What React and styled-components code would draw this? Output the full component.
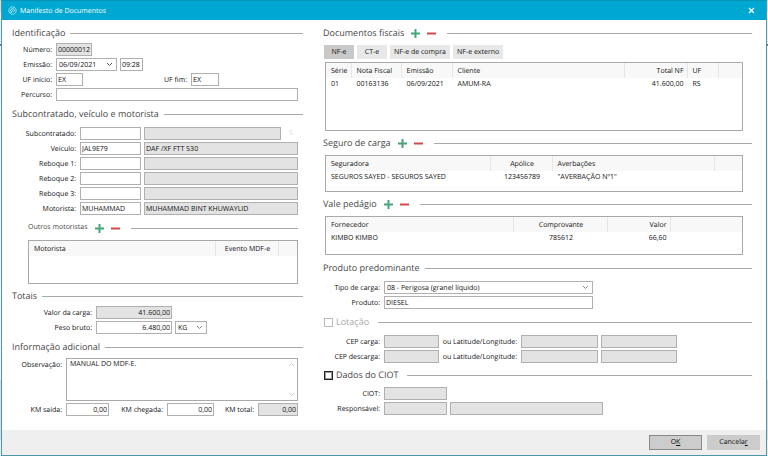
import React, { useId } from "react";
import styled, { createGlobalStyle, css } from "styled-components";

const Global = createGlobalStyle`
  * { box-sizing: border-box; }
  body { margin: 0; background: #eef3f5; text-rendering: geometricPrecision; }
  body, button, input, select, textarea {
    font-family: "Open Sans", "Noto Sans", sans-serif;
    font-size: 7px;
    color: #111;
  }
  button, input, select, textarea { text-rendering: inherit; }
`;

const Page = styled.div`
  min-height: 100vh;
  padding: 0 1px;
  display: flex;
  background: linear-gradient(#c9dde3 0 12px, #e9f1f4 12px 44px, #5c7f88 44px 46px, #eef3f5 46px 380px, #d3dfe3 380px 440px, #e9eff1 440px);
`;

const Window = styled.main`
  flex: 1;
  display: flex;
  flex-direction: column;
  background: #fff;
  border: 1px solid #4d98a8;
  border-top-color: #0793b5;
`;

const TitleBar = styled.header`
  height: 19px;
  flex: none;
  display: flex;
  align-items: center;
  gap: 3px;
  padding: 0 11px 0 6px;
  background: #00a8d1;
  color: #fff;
`;

const Title = styled.h1`
  flex: 1;
  margin: 0;
  padding-top: 1px;
  font-size: 7px;
  font-weight: 400;
`;

const CloseButton = styled.button`
  display: flex;
  padding: 0;
  border: 0;
  background: none;
`;

const Body = styled.div`
  flex: 1;
  display: grid;
  grid-template-columns: 291fr 429fr;
  gap: 20px;
  padding: 5px 14px 14px 10px;
`;

const Column = styled.div`
  display: flex;
  flex-direction: column;
  gap: 4px;
  min-width: 0;
`;

const Section = styled.section`
  display: flex;
  flex-direction: column;
  gap: ${(p) => p.$gap ?? 4}px;
  padding-bottom: ${(p) => p.$after ?? 0}px;
`;

const HeadingRow = styled.div`
  height: 16px;
  display: flex;
  align-items: center;
  gap: ${(p) => (p.$actions ? 7 : 5)}px;
  color: ${(p) => (p.$muted ? "#aaa" : "#484848")};

  &::after {
    content: "";
    flex: 1;
    height: 1px;
    margin-left: ${(p) => (p.$actions || p.$check ? 4 : 0)}px;
    background: #a9a9a9;
  }
`;

const HeadingText = styled.h2`
  margin: 0;
  font-size: ${(p) => (p.$small ? 7 : 9)}px;
  font-weight: 400;
  line-height: 16px;
  white-space: nowrap;
`;

const IconButton = styled.button`
  display: flex;
  padding: 0;
  border: 0;
  background: none;
`;

const CheckLabel = styled.label`
  display: flex;
  align-items: center;
  gap: 3px;
`;

const CheckBox = styled.input`
  appearance: none;
  width: 9px;
  height: 9px;
  margin: 0 0 0 1px;
  background: #fff;
  border: 1px solid #222;
  outline: 1px solid #999;
  outline-offset: -2px;

  &:disabled {
    border-color: #bbb;
    outline: 0;
  }
`;

const Rows = styled.div`
  display: flex;
  flex-direction: column;
  gap: 2px;
  padding-right: ${(p) => (p.$inset ? 5 : 0)}px;
`;

const Row = styled.div`
  display: flex;
  gap: 3px;
`;

const Label = styled.label`
  flex: 0 0 ${(p) => (p.$w ? `${p.$w}px` : "auto")};
  height: 13px;
  padding-right: 1px;
  text-align: right;
  line-height: 15px;
  white-space: nowrap;
`;

const box = css`
  flex: ${(p) => (p.$w ? `0 0 ${p.$w}px` : "1 1 0")};
  min-width: 0;
  width: 0;
  margin: 0;
  border: 1px solid #b0b0b0;
  border-radius: 0;
  background: #fff;
`;

const TextBox = styled.input`
  ${box}
  height: 13px;
  padding: 1px 1px 0;
  text-align: ${(p) => (p.$right ? "right" : "left")};

  &:read-only {
    background: #e3e3e3;
  }
`;

const TextArea = styled.textarea`
  display: block;
  width: 100%;
  height: 43px;
  padding: 0 3px;
  line-height: 12px;
  border: 1px solid #a9a9a9;
  resize: none;
  overflow: hidden;
`;

const AreaWrap = styled.div`
  flex: 1;
  position: relative;
`;

const ScrollArrows = styled.div`
  position: absolute;
  inset: 4px 3px 4px auto;
  display: flex;
  flex-direction: column;
  justify-content: space-between;
`;

const SelectWrap = styled.div`
  ${box}
  height: 13px;
  display: grid;
  align-items: center;

  & > * { grid-area: 1 / 1; }
  & > svg { justify-self: end; margin-right: 3px; pointer-events: none; }
`;

const NativeSelect = styled.select`
  appearance: none;
  width: 100%;
  height: 11px;
  padding: 1px 12px 0 2px;
  border: 0;
  background: transparent;
`;

const Search = styled.span`
  width: 14px;
  text-align: center;
  color: #ddd;
  line-height: 13px;
`;

const Tabs = styled.div`
  display: flex;
  gap: 3px;
  padding: 1px 0 0 1px;
`;

const Tab = styled.button`
  height: 14px;
  padding: 0 4px;
  min-width: 30px;
  border: 0;
  white-space: nowrap;
  background: ${(p) => (p["aria-selected"] ? "#c9c9c9" : "#e8e8e8")};
`;

const TableBox = styled.div`
  min-height: ${(p) => p.$h}px;
  margin: 0 ${(p) => (p.$nested ? "0" : "9px")} 0 ${(p) => (p.$nested ? "0" : "2px")};
  border: 1px solid #a9a9a9;
`;

const Table = styled.table`
  width: 100%;
  table-layout: fixed;
  border-collapse: collapse;
`;

const Cell = styled.td`
  height: ${(p) => (p.as ? 15 : 12)}px;
  padding: ${(p) => (p.as ? 2 : 0)}px 3px 0 5px;
  font-weight: 400;
  text-align: ${(p) => p.$align ?? "left"};
  white-space: nowrap;
  background: ${(p) => (p.as ? "#f8f8f8" : "none")};
  border-right: ${(p) => (p.as ? "1px solid #e6e6e6" : "1px solid transparent")};

  &:last-child { border-right: 0; }
`;

const Nested = styled.div`
  display: flex;
  flex-direction: column;
  gap: 4px;
  padding: 1px 5px 0 16px;
`;

const Footer = styled.footer`
  height: 25px;
  flex: none;
  display: flex;
  justify-content: flex-end;
  align-items: center;
  gap: 5px;
  padding: 0 6px;
  background: #efefef;
`;

const PushButton = styled.button`
  width: 53px;
  height: 15px;
  padding: 0;
  background: #ccc;
  border: 1px solid ${(p) => (p.$primary ? "#888" : "#ccc")};
`;

const Chevron = ({ up, color = "#888" }) => (
  <svg width="7" height="5" viewBox="0 0 7 5" aria-hidden="true">
    <path d={up ? "M1 4l2.5-2.5L6 4" : "M1 1l2.5 2.5L6 1"} fill="none" stroke={color} />
  </svg>
);

const Logo = () => (
  <svg width="9" height="9" viewBox="0 0 9 9" aria-hidden="true">
    <path d="M2.2 7.4A3.7 3.7 0 1 1 4.5 8.2L3 8.4" fill="none" stroke="#bdeaf5" strokeWidth=".8" />
    <path d="M3.2 5.7A1.8 1.8 0 1 1 5.8 5.7M4.5 4.4L2.5 7.5" fill="none" stroke="#dff6fb" strokeWidth=".9" />
  </svg>
);

const Actions = () => (
  <>
    <IconButton aria-label="Adicionar">
      <svg width="9" height="9" viewBox="0 0 9 9">
        <path d="M4.5 0v9M0 4.5h9" stroke="#45a578" strokeWidth="2" />
      </svg>
    </IconButton>
    <IconButton aria-label="Remover">
      <svg width="9" height="9" viewBox="0 0 9 9">
        <path d="M0 4.5h9" stroke="#d24b4b" strokeWidth="2" />
      </svg>
    </IconButton>
  </>
);

const Heading = ({ children, actions, small }) => (
  <HeadingRow $actions={actions}>
    <HeadingText $small={small}>{children}</HeadingText>
    {actions && <Actions />}
  </HeadingRow>
);

const CheckHeading = ({ children, disabled }) => (
  <HeadingRow $check $muted={disabled}>
    <CheckLabel>
      <CheckBox type="checkbox" disabled={disabled} />
      <HeadingText>{children}</HeadingText>
    </CheckLabel>
  </HeadingRow>
);

const Field = ({ label, lw, w, value = "", locked, right }) => {
  const id = useId();
  return (
    <>
      <Label htmlFor={id} $w={lw}>{label}</Label>
      <TextBox id={id} $w={w} $right={right} defaultValue={value} readOnly={locked} />
    </>
  );
};

const Select = ({ id, w, value, label, color }) => (
  <SelectWrap $w={w}>
    <NativeSelect id={id} aria-label={label}>
      <option>{value}</option>
    </NativeSelect>
    <Chevron color={color} />
  </SelectWrap>
);

const DataTable = ({ h, nested, cols, row }) => (
  <TableBox $h={h} $nested={nested}>
    <Table>
      <colgroup>
        {cols.map(([name, width], i) => (
          <col key={i} width={width} />
        ))}
      </colgroup>
      <thead>
        <tr>
          {cols.map(([name, , align], i) => (
            <Cell as="th" key={i} $align={align}>{name}</Cell>
          ))}
        </tr>
      </thead>
      {row && (
        <tbody>
          <tr>
            {row.map((text, i) => (
              <Cell key={i} $align={cols[i][2]}>{text}</Cell>
            ))}
          </tr>
        </tbody>
      )}
    </Table>
  </TableBox>
);

const people = [
  ["Veículo:", "JAL9E79", "DAF /XF FTT 530"],
  ["Reboque 1:", "", ""],
  ["Reboque 2:", "", ""],
  ["Reboque 3:", "", ""],
  ["Motorista:", "MUHAMMAD", "MUHAMMAD BINT KHUWAYLID"],
];

export default function App() {
  return (
    <Page>
      <Global />
      <Window>
        <TitleBar>
          <Logo />
          <Title>Manifesto de Documentos</Title>
          <CloseButton aria-label="Fechar">
            <svg width="7" height="7" viewBox="0 0 7 7">
              <path d="M1 1l5 5M6 1L1 6" stroke="#fff" strokeWidth="1.2" />
            </svg>
          </CloseButton>
        </TitleBar>
        <Body>
          <Column>
            <Section $gap={2} $after={1}>
              <Heading>Identificação</Heading>
              <Rows $inset>
                <Row><Field label="Número:" lw={41} w={36} value="00000012" locked /></Row>
                <Row>
                  <Label htmlFor="emissao" $w={41}>Emissão:</Label>
                  <Select id="emissao" w={61} value="06/09/2021" color="#555" />
                  <TextBox aria-label="Hora" $w={23} defaultValue="09:28" />
                </Row>
                <Row>
                  <Field label="UF início:" lw={41} w={27} value="EX" />
                  <Field label="UF fim:" lw={102} w={28} value="EX" />
                </Row>
                <Row><Field label="Percurso:" lw={41} /></Row>
              </Rows>
            </Section>
            <Section $gap={5}>
              <Heading>Subcontratado, veículo e motorista</Heading>
              <Rows $inset>
                <Row>
                  <Field label="Subcontratado:" lw={65} w={61} />
                  <TextBox aria-label="Nome do subcontratado" readOnly />
                  <Search>S</Search>
                </Row>
                {people.map(([label, code, name]) => (
                  <Row key={label}>
                    <Field label={label} lw={65} w={61} value={code} />
                    <TextBox aria-label={`${label} descrição`} defaultValue={name} readOnly />
                  </Row>
                ))}
              </Rows>
            </Section>
            <Nested>
              <Heading small actions>Outros motoristas</Heading>
              <DataTable
                h={44}
                nested
                cols={[["Motorista"], ["Evento MDF-e", 63, "center"], ["", 19]]}
              />
            </Nested>
            <Section $gap={2} $after={1}>
              <Heading>Totais</Heading>
              <Rows $inset>
                <Row><Field label="Valor da carga:" lw={81} w={76} value="41.600,00" locked right /></Row>
                <Row>
                  <Field label="Peso bruto:" lw={81} w={76} value="6.480,00" right />
                  <Select label="Unidade" w={32} value="KG" />
                </Row>
              </Rows>
            </Section>
            <Section $gap={3}>
              <Heading>Informação adicional</Heading>
              <Rows $inset>
                <Row>
                  <Label htmlFor="obs" $w={51}>Observação:</Label>
                  <AreaWrap>
                    <TextArea id="obs" defaultValue="MANUAL DO MDF-E." />
                    <ScrollArrows>
                      <Chevron up color="#ccc" />
                      <Chevron color="#ccc" />
                    </ScrollArrows>
                  </AreaWrap>
                </Row>
                <Row>
                  <Field label="KM saída:" lw={51} w={43} value="0,00" right />
                  <Field label="KM chegada:" lw={52} w={47} value="0,00" right />
                  <Field label="KM total:" lw={38} value="0,00" locked right />
                </Row>
              </Rows>
            </Section>
          </Column>
          <Column>
            <Section $gap={3}>
              <Heading actions>Documentos fiscais</Heading>
              <Tabs role="tablist">
                <Tab role="tab" aria-selected>NF-e</Tab>
                <Tab role="tab">CT-e</Tab>
                <Tab role="tab">NF-e de compra</Tab>
                <Tab role="tab">NF-e externo</Tab>
              </Tabs>
              <DataTable
                h={69}
                cols={[["Série", 25], ["Nota Fiscal", 50], ["Emissão", 51], ["Cliente"], ["Total NF", 63, "right"], ["UF", 31], ["", 24]]}
                row={["01", "00163136", "06/09/2021", "AMUM-RA", "41.600,00", "RS", ""]}
              />
            </Section>
            <Section>
              <Heading actions>Seguro de carga</Heading>
              <DataTable
                h={37}
                cols={[["Seguradora", 164], ["Apólice", 62, "center"], ["Averbações"], ["", 28]]}
                row={["SEGUROS SAYED - SEGUROS SAYED", "123456789", "\"AVERBAÇÃO Nº1\"", ""]}
              />
            </Section>
            <Section $after={1}>
              <Heading actions>Vale pedágio</Heading>
              <DataTable
                h={39}
                cols={[["Fornecedor"], ["Comprovante", 94, "center"], ["Valor", 63, "right"], ["", 72]]}
                row={["KIMBO KIMBO", "785612", "66,60", ""]}
              />
            </Section>
            <Section $gap={5} $after={1}>
              <Heading>Produto predominante</Heading>
              <Rows>
                <Row>
                  <Label htmlFor="tipo" $w={58}>Tipo de carga:</Label>
                  <Select id="tipo" w={209} value="08 - Perigosa (granel líquido)" />
                </Row>
                <Row><Field label="Produto:" lw={58} w={209} value="DIESEL" /></Row>
              </Rows>
            </Section>
            <Section $gap={5}>
              <CheckHeading disabled>Lotação</CheckHeading>
              <Rows>
                {["CEP carga:", "CEP descarga:"].map((label) => (
                  <Row key={label}>
                    <Field label={label} lw={58} w={55} locked />
                    <Field label="ou Latitude/Longitude:" lw={76} w={77} locked />
                    <TextBox aria-label="Longitude" $w={76} readOnly />
                  </Row>
                ))}
              </Rows>
            </Section>
            <Section>
              <CheckHeading>Dados do CIOT</CheckHeading>
              <Rows>
                <Row><Field label="CIOT:" lw={58} w={63} locked /></Row>
                <Row>
                  <Field label="Responsável:" lw={58} w={63} locked />
                  <TextBox aria-label="Nome do responsável" $w={153} readOnly />
                </Row>
              </Rows>
            </Section>
          </Column>
        </Body>
        <Footer>
          <PushButton $primary>O<u>K</u></PushButton>
          <PushButton>Cancela<u>r</u></PushButton>
        </Footer>
      </Window>
    </Page>
  );
}
